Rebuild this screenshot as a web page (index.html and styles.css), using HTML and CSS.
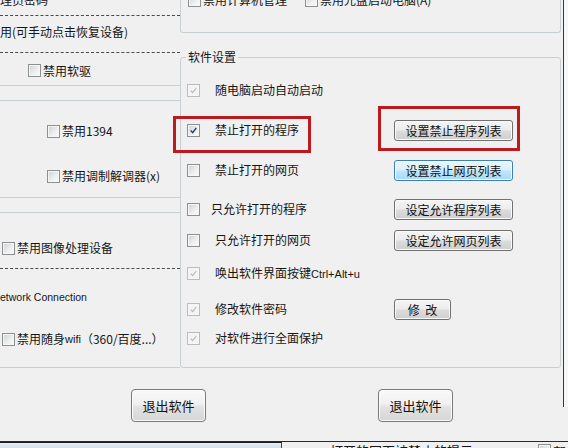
FILE: index.html
```html
<!DOCTYPE html>
<html lang="zh-CN">
<head>
    <meta charset="UTF-8">
    <meta name="viewport" content="width=device-width, initial-scale=1.0">
    <title>软件设置</title>
    <link rel="stylesheet" href="styles.css">
</head>
<body>
    <div class="screen">
        <div class="window">
            <div class="panes">
                <!-- left: hardware options (cropped) -->
                <div class="left">
                    <div class="l-cut dashed">理员密码</div>
                    <div class="l-restore dashed">用(可手动点击恢复设备)</div>
                    <div class="l-floppy">
                        <label class="check"><span class="cb"></span>禁用软驱</label>
                    </div>
                    <div class="l-group l-ports">
                        <label class="check"><span class="cb"></span>禁用1394</label>
                        <label class="check gap-modem"><span class="cb"></span>禁用调制解调器(x)</label>
                    </div>
                    <div class="l-group l-devices">
                        <div class="l-imaging dashed">
                            <label class="check"><span class="cb"></span>禁用图像处理设备</label>
                        </div>
                        <div class="l-network">etwork Connection</div>
                        <label class="check l-wifi"><span class="cb"></span>禁用随身<span class="latin">wifi</span>（360/百度...）</label>
                    </div>
                </div>

                <!-- right: system + software settings -->
                <div class="right">
                    <div class="r-top">
                        <label class="check r-first"><span class="cb"></span>禁用计算机管理</label>
                        <label class="check"><span class="cb"></span>禁用光盘启动电脑(A)</label>
                    </div>
                    <div class="soft-group">
                        <div class="legend">软件设置</div>
                        <div class="options">
                            <div class="opt">
                                <span class="cb-cell"><span class="cb cb-off cb-ticked"><svg viewBox="0 0 13 13"><path d="M3.2 6.6 5.5 9 9.8 3.6"/></svg></span></span>
                                <span class="opt-label">随电脑启动自动启动</span>
                            </div>
                            <div class="opt">
                                <span class="cb-cell"><span class="cb cb-ticked"><svg viewBox="0 0 13 13"><path d="M3.2 6.6 5.5 9 9.8 3.6"/></svg></span></span>
                                <span class="opt-label">禁止打开的程序</span>
                                <button class="btn">设置禁止程序列表</button>
                            </div>
                            <div class="opt">
                                <span class="cb-cell"><span class="cb"></span></span>
                                <span class="opt-label">禁止打开的网页</span>
                                <button class="btn btn-hot">设置禁止网页列表</button>
                            </div>
                            <div class="opt">
                                <span class="cb-cell"><span class="cb"></span></span>
                                <span class="opt-label shift-left">只允许打开的程序</span>
                                <button class="btn">设定允许程序列表</button>
                            </div>
                            <div class="opt">
                                <span class="cb-cell"><span class="cb"></span></span>
                                <span class="opt-label">只允许打开的网页</span>
                                <button class="btn">设定允许网页列表</button>
                            </div>
                            <div class="opt">
                                <span class="cb-cell"><span class="cb cb-off cb-ticked"><svg viewBox="0 0 13 13"><path d="M3.2 6.6 5.5 9 9.8 3.6"/></svg></span></span>
                                <span class="opt-label">唤出软件界面按键<span class="latin">Ctrl+Alt+u</span></span>
                            </div>
                            <div class="opt">
                                <span class="cb-cell"><span class="cb cb-off cb-ticked"><svg viewBox="0 0 13 13"><path d="M3.2 6.6 5.5 9 9.8 3.6"/></svg></span></span>
                                <span class="opt-label">修改软件密码</span>
                                <button class="btn btn-small">修&nbsp;&nbsp;改</button>
                            </div>
                            <div class="opt">
                                <span class="cb-cell"><span class="cb cb-off cb-ticked"><svg viewBox="0 0 13 13"><path d="M3.2 6.6 5.5 9 9.8 3.6"/></svg></span></span>
                                <span class="opt-label">对软件进行全面保护</span>
                            </div>
                        </div>
                    </div>
                </div>
            </div>

            <div class="footer">
                <button class="btn btn-exit">退出软件</button>
                <button class="btn btn-exit">退出软件</button>
            </div>
        </div>

        <!-- window behind, peeking out at the bottom -->
        <div class="strip">
            <div class="strip-box"></div>
            <div class="strip-title">打开的网页被禁止的提示</div>
            <div class="strip-help"><span class="cb"></span>帮</div>
        </div>

        <div class="mark mark-program"></div>
        <div class="mark mark-list"></div>
        <div class="frame-edge"></div>
    </div>
</body>
</html>
```

FILE: styles.css
```css
* {
    box-sizing: border-box;
}

body {
    margin: 0;
    padding: 0;
    background: #f0f0f0;
    font-family: 'Noto Sans CJK SC', 'Noto Sans', sans-serif;
    font-size: 12px;
    color: #161616;
}

.screen {
    position: relative;
    width: 568px;
    height: 448px;
    overflow: hidden;
    background: #f0f0f0;
}

.window {
    height: 441px;
}

.panes {
    display: flex;
    align-items: flex-start;
    height: 368px;
}

/* ---------- shared bits ---------- */

.check {
    display: flex;
    align-items: center;
    height: 20px;
    line-height: 20px;
    white-space: nowrap;
}

.cb {
    display: inline-flex;
    flex: 0 0 13px;
    width: 13px;
    height: 13px;
    margin-right: 2px;
    border: 1px solid #8e8f8f;
    background: linear-gradient(135deg, #cdd0d4 0%, #eef0f1 60%, #fbfbfb 100%);
    box-shadow: inset 0 0 0 1px #f6f6f6;
}

.cb svg {
    width: 11px;
    height: 11px;
    fill: none;
    stroke: #27407a;
    stroke-width: 1.7;
}

.cb-off {
    border-color: #bcbcbc;
    background: #f4f4f4;
}

.cb-off svg {
    stroke: #b4b4b4;
    stroke-width: 1.2;
}

.dashed {
    border-bottom: 1px dashed #4a4a4a;
}

.latin {
    font-family: 'Liberation Sans', Arial, sans-serif;
    font-size: 11px;
}

/* ---------- left column ---------- */

.left {
    width: 180px;
    flex: 0 0 180px;
}

.l-cut {
    display: flex;
    align-items: center;
    height: 31px;
    margin-top: -15px;
    line-height: 20px;
}

.l-restore {
    display: flex;
    align-items: center;
    height: 37px;
    padding-bottom: 4px;
    line-height: 20px;
}

.l-floppy {
    display: flex;
    align-items: center;
    height: 33px;
    padding: 3px 0 0 28px;
    border-bottom: 1px solid #c8cfd3;
}

.l-group {
    margin-top: 14px;
    border-top: 1px solid #c8cfd3;
    border-bottom: 1px solid #c8cfd3;
}

.l-ports {
    height: 98px;
    padding: 20px 0 0 47px;
}

.gap-modem {
    margin-top: 25px;
}

.l-devices {
    height: 156px;
}

.l-imaging {
    height: 56px;
    padding: 25px 0 0 2px;
}

.l-network {
    height: 40px;
    padding-top: 18px;
    line-height: 20px;
    font-family: 'Liberation Sans', Arial, sans-serif;
    font-size: 10.5px;
}

.l-wifi {
    margin-top: 20px;
    padding-left: 2px;
}

/* ---------- right column ---------- */

.right {
    width: 388px;
    flex: 0 0 388px;
}

.r-top {
    display: flex;
    width: 381px;
    height: 48px;
    margin-top: -15px;
    padding: 5px 0 0 7px;
    border: 1px solid #c8cfd3;
    border-top: none;
    border-radius: 0 0 3px 3px;
}

.r-first {
    width: 117px;
}

.soft-group {
    width: 381px;
    height: 311px;
    margin-top: 24px;
    border: 1px solid #c8cfd3;
    border-radius: 3px;
}

.legend {
    width: fit-content;
    height: 18px;
    margin: -10px 0 0 5px;
    padding: 0 2px;
    line-height: 18px;
    background: #f0f0f0;
}

.options {
    display: grid;
    grid-template-rows: 40px 40px 39px 31px 33px 36px 29px 22px;
    align-items: start;
    margin-top: 13px;
    padding-left: 6px;
}

.opt {
    display: flex;
    align-items: center;
    height: 22px;
    line-height: 20px;
    white-space: nowrap;
}

.cb-cell {
    display: flex;
    width: 28px;
    flex: 0 0 28px;
}

.opt-label {
    width: 179px;
    flex: 0 0 179px;
}

.shift-left {
    margin-left: -4px;
    margin-right: 4px;
}

/* ---------- buttons ---------- */

.btn {
    width: 119px;
    height: 21px;
    padding: 0;
    font-family: inherit;
    font-size: 12px;
    line-height: 19px;
    color: #111;
    border: 1px solid #707070;
    border-radius: 3px;
    background: linear-gradient(#f4f4f4 0%, #ececec 48%, #dcdcdc 52%, #cfcfcf 100%);
    box-shadow: inset 0 0 0 1px #fbfbfb;
}

.btn-hot {
    border-color: #3c7fb1;
    background: linear-gradient(#eaf6fd 0%, #d9f0fc 48%, #bee6fd 52%, #a7d9f5 100%);
}

.btn-small {
    width: 57px;
}

.footer {
    display: flex;
    gap: 172px;
    height: 73px;
    padding: 21px 0 0 131px;
}

.btn-exit {
    width: 75px;
    height: 33px;
    font-size: 13px;
    border-color: #7a7a7a;
    border-radius: 4px;
    background: linear-gradient(#fafafa 0%, #f0f0f0 45%, #e2e2e2 55%, #d6d6d6 100%);
}

/* ---------- window peeking out below ---------- */

.strip {
    display: flex;
    height: 7px;
    border-top: 1px solid #2a2a2a;
}

.strip-box {
    width: 282px;
    height: 7px;
    border-top: 1px solid #1c1c1c;
    border-right: 1px solid #444;
    background: linear-gradient(#e6eef2, #cfdde4);
}

.strip-title {
    width: 256px;
    padding-left: 48px;
    font-size: 13px;
    line-height: 16px;
    margin-top: 1px;
    white-space: nowrap;
}

.strip-help {
    display: flex;
    align-items: flex-start;
    padding-top: 2px;
    font-size: 13px;
    line-height: 16px;
}

/* ---------- overlays ---------- */

.mark {
    position: absolute;
    border: 3px solid #bd1a20;
}

.mark-program {
    left: 173px;
    top: 116px;
    width: 138px;
    height: 37px;
}

.mark-list {
    left: 378px;
    top: 106px;
    width: 142px;
    height: 45px;
}

.frame-edge {
    position: absolute;
    left: 563px;
    top: 0;
    width: 5px;
    height: 407px;
    border-left: 1px solid #3a3a3a;
    background: #f7f7f7;
}
```
